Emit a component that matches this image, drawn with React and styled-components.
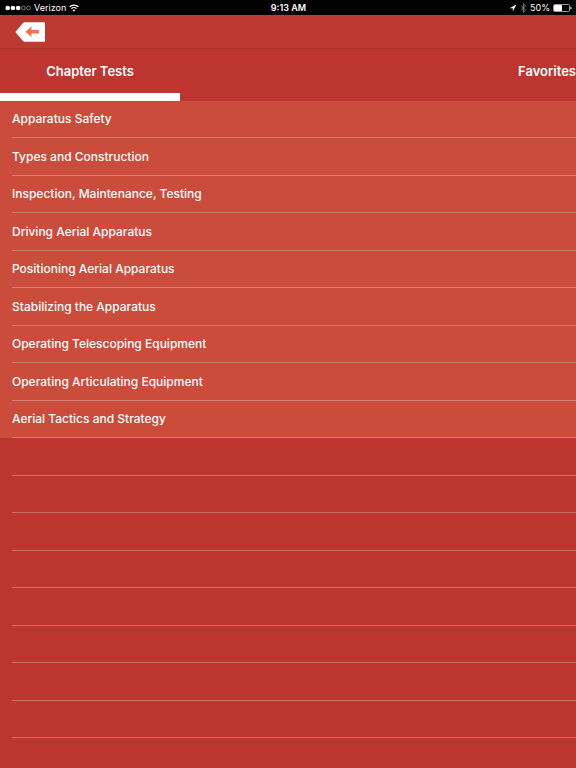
import React, { useState } from "react";
import styled, { createGlobalStyle } from "styled-components";

const GlobalStyle = createGlobalStyle`
  * {
    box-sizing: border-box;
  }

  body {
    margin: 0;
    background-color: #be342e;
    font-family: Inter, "Liberation Sans", sans-serif;
    color: #fff;
  }

  button {
    border: 0;
    margin: 0;
    padding: 0;
    background: none;
    color: inherit;
    font-family: inherit;
    cursor: pointer;
  }
`;

const Screen = styled.div`
  min-height: 100vh;
  overflow: hidden;
`;

const StatusBar = styled.div`
  display: grid;
  grid-template-columns: 1fr auto 1fr;
  align-items: center;
  height: 15px;
  padding: 0 4px 0 5px;
  background-color: #000;
  font-size: 9px;
  line-height: 15px;
`;

const StatusGroup = styled.div`
  display: flex;
  align-items: center;
  gap: 3px;
  justify-content: ${props => (props.$end ? "flex-end" : "flex-start")};

  svg {
    display: block;
    flex: none;
  }
`;

const Clock = styled.span`
  font-weight: 600;
`;

const NavBar = styled.header`
  display: flex;
  align-items: center;
  height: 34px;
  padding-left: 15px;
  background-color: #bd3a33;
  border-bottom: 1px solid #a6312c;
`;

const BackButton = styled.button`
  display: block;
  height: 20px;

  svg {
    display: block;
  }
`;

const TabBar = styled.nav`
  display: flex;
  justify-content: space-between;
  height: 52px;
`;

const Tab = styled.button`
  width: 180px;
  padding: 4px 0;
  font-size: 13px;
  font-weight: 600;
  line-height: 20px;
  text-align: ${props => (props.$last ? "right" : "center")};
  border-bottom: 8px solid ${props => (props.$active ? "#fff" : "transparent")};
`;

const List = styled.ul`
  list-style: none;
  margin: 0;
  padding: 0;
`;

const Row = styled.li`
  height: 37px;
  padding-left: 12px;
  background-color: ${props => (props.$empty ? "transparent" : "#cb4c3b")};

  &:nth-child(even) {
    height: 38px;
  }
`;

const RowContent = styled.div`
  height: 100%;
  border-bottom: 1px solid ${props => (props.$empty ? "#c8706a" : "#d07f74")};
`;

const RowButton = styled.button`
  width: 100%;
  height: 100%;
  text-align: left;
  font-size: 12px;
  font-weight: 500;
  line-height: 16px;
`;

const chapters = [
  "Apparatus Safety",
  "Types and Construction",
  "Inspection, Maintenance, Testing",
  "Driving Aerial Apparatus",
  "Positioning Aerial Apparatus",
  "Stabilizing the Apparatus",
  "Operating Telescoping Equipment",
  "Operating Articulating Equipment",
  "Aerial Tactics and Strategy"
];

const EMPTY_ROWS = 8;

const Signal = () => (
  <svg width="26" height="6" viewBox="0 0 26 6" aria-hidden="true">
    {[0, 1, 2, 3, 4].map(i => (
      <circle
        key={i}
        cx={2.7 + i * 5.2}
        cy="3"
        r={i < 3 ? 2.3 : 1.9}
        fill={i < 3 ? "#fff" : "none"}
        stroke={i < 3 ? "none" : "#aaa"}
        strokeWidth="0.7"
      />
    ))}
  </svg>
);

const Wifi = () => (
  <svg width="10" height="8" viewBox="0 0 10 8" fill="none" stroke="#fff" aria-hidden="true">
    <path d="M0.7 2.8C3 0.5 7 0.5 9.3 2.8" strokeWidth="1.3" />
    <path d="M2.4 4.7C3.8 3.3 6.2 3.3 7.6 4.7" strokeWidth="1.2" />
    <path d="M5 7.6L3.5 6.1Q5 4.8 6.5 6.1Z" fill="#fff" stroke="none" />
  </svg>
);

const Location = () => (
  <svg width="8" height="8" viewBox="0 0 8 8" aria-hidden="true">
    <path d="M7.4 0.5L0.6 4.2H3.8V7.6Z" fill="#fff" />
  </svg>
);

const Bluetooth = () => (
  <svg width="7" height="10" viewBox="0 0 7 10" aria-hidden="true">
    <path d="M1.1 2.7L5.6 7L3.4 9.4V0.6L5.6 3L1.1 7.3" fill="none" stroke="#999" strokeWidth="0.8" />
  </svg>
);

const Battery = () => (
  <svg width="19" height="8" viewBox="0 0 19 8" aria-hidden="true">
    <rect x="0.5" y="0.5" width="16" height="7" rx="1.2" fill="none" stroke="#ddd" strokeWidth="0.7" />
    <rect x="1" y="1" width="8" height="6" rx="0.5" fill="#fff" />
    <path d="M17.4 2.5Q18.6 3 18.6 4T17.4 5.5Z" fill="#fff" />
  </svg>
);

const BackIcon = () => (
  <svg width="30" height="20" viewBox="0 0 30 20" aria-hidden="true">
    <path d="M0.4 10L8 1Q8.7 0.3 9.7 0.3H29Q30 0.3 30 1.3V18.7Q30 19.7 29 19.7H9.7Q8.7 19.7 8 19Z" fill="#fff" />
    <path d="M10.3 9.8L16.5 4.5V8H24V11.6H16.5V15.1Z" fill="#ef7650" />
  </svg>
);

const App = () => {
  const [activeTab, setActiveTab] = useState("chapters");

  return (
    <Screen>
      <GlobalStyle />
      <StatusBar>
        <StatusGroup>
          <Signal />
          <span>Verizon</span>
          <Wifi />
        </StatusGroup>
        <Clock>9:13 AM</Clock>
        <StatusGroup $end>
          <Location />
          <Bluetooth />
          <span>50%</span>
          <Battery />
        </StatusGroup>
      </StatusBar>
      <NavBar>
        <BackButton type="button" aria-label="Back">
          <BackIcon />
        </BackButton>
      </NavBar>
      <TabBar>
        <Tab
          type="button"
          $active={activeTab === "chapters"}
          onClick={() => setActiveTab("chapters")}
        >
          Chapter Tests
        </Tab>
        <Tab
          type="button"
          $last
          $active={activeTab === "favorites"}
          onClick={() => setActiveTab("favorites")}
        >
          Favorites
        </Tab>
      </TabBar>
      <List>
        {chapters.map(title => (
          <Row key={title}>
            <RowContent>
              <RowButton type="button">{title}</RowButton>
            </RowContent>
          </Row>
        ))}
        {Array.from({ length: EMPTY_ROWS }, (_, i) => (
          <Row key={i} $empty aria-hidden="true">
            <RowContent $empty />
          </Row>
        ))}
      </List>
    </Screen>
  );
};

export default App;
